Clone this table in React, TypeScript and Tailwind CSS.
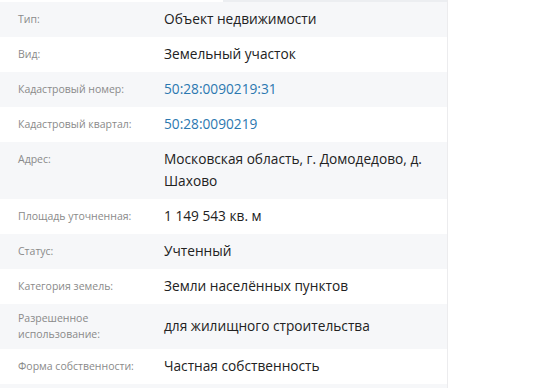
const rows: { label: string; value: string; link?: boolean; top?: boolean }[] = [
  { label: "Тип:", value: "Объект недвижимости" },
  { label: "Вид:", value: "Земельный участок" },
  { label: "Кадастровый номер:", value: "50:28:0090219:31", link: true },
  { label: "Кадастровый квартал:", value: "50:28:0090219", link: true },
  { label: "Адрес:", value: "Московская область, г. Домодедово, д. Шахово", top: true },
  { label: "Площадь уточненная:", value: "1 149 543 кв. м" },
  { label: "Статус:", value: "Учтенный" },
  { label: "Категория земель:", value: "Земли населённых пунктов" },
  { label: "Разрешенное использование:", value: "для жилищного строительства" },
  { label: "Форма собственности:", value: "Частная собственность" },
  { label: "", value: "" },
];

export default function App() {
  return (
    <div className="flex h-[388px] w-[556px] overflow-hidden bg-white font-['Open_Sans',sans-serif]">
      <div className="flex w-[448px] flex-col border-r border-[#ececee] shadow-[1px_0_3px_rgba(0,0,0,0.06)]">
        <div className="flex h-[2px] shrink-0">
          <div className="w-[223px] bg-white" />
          <div className="flex-1 bg-[#eceef1]" />
        </div>
        {rows.map((r, i) => (
          <div
            key={i}
            className={`flex shrink-0 pt-[6px] pb-[7px] ${r.top ? "items-start" : "items-center"} ${
              i % 2 === 0 ? "bg-[#f6f7f9]" : "bg-white"
            }`}
          >
            <div
              className={`w-[164px] shrink-0 pl-[18px] pr-3 text-[10.5px] text-[#8a8a8a] ${
                r.label.length > 22 ? "leading-4" : "leading-[22px]"
              }`}
            >
              {r.label}
            </div>
            <div
              className={`min-h-[22px] flex-1 pr-3 text-[13.7px] leading-[22px] ${
                r.link ? "text-[#2b78b0]" : "text-[#222]"
              }`}
            >
              {r.value}
            </div>
          </div>
        ))}
      </div>
      <div className="flex-1 bg-white" />
    </div>
  );
}
